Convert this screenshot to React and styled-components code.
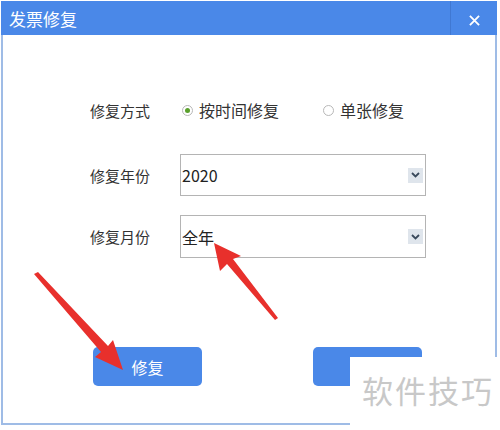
import React from "react";
import styled, { createGlobalStyle } from "styled-components";

const GlobalStyle = createGlobalStyle`
  html, body {
    margin: 0;
    padding: 0;
    background: #ffffff;
  }
  body {
    font-family: "Noto Sans CJK SC", "Noto Sans", sans-serif;
  }
`;

const App = () => {
  return (
    <>
      <GlobalStyle />
      <Page>
        <Dialog>
          <TitleBar>
            <Title>发票修复</Title>
            <CloseArea>
              <CloseIcon viewBox="0 0 12 12">
                <path d="M1 1 L11 11 M11 1 L1 11" />
              </CloseIcon>
            </CloseArea>
          </TitleBar>
          <Body>
            <Row $top={0} $height={24}>
              <Label>修复方式</Label>
              <RadioGroup>
                <RadioOption>
                  <Radio checked />
                  按时间修复
                </RadioOption>
                <RadioOption>
                  <Radio />
                  单张修复
                </RadioOption>
              </RadioGroup>
            </Row>

            <Row $top={32} $height={42}>
              <Label>修复年份</Label>
              <Select>
                <SelectValue>2020</SelectValue>
                <Chevron>
                  <svg width="9" height="6" viewBox="0 0 9 6">
                    <path d="M1 1 L4.5 4.5 L8 1" />
                  </svg>
                </Chevron>
              </Select>
            </Row>

            <Row $top={19} $height={43}>
              <Label>修复月份</Label>
              <Select>
                <SelectValue>全年</SelectValue>
                <Chevron>
                  <svg width="9" height="6" viewBox="0 0 9 6">
                    <path d="M1 1 L4.5 4.5 L8 1" />
                  </svg>
                </Chevron>
              </Select>
            </Row>

            <Buttons>
              <Button>修复</Button>
              {/* second button's label is hidden under the watermark */}
              <Button aria-label="取消" />
            </Buttons>
          </Body>
        </Dialog>

        <Arrows viewBox="0 0 500 430">
          <polygon points="34,274 38,272 108,346 113,340 123,370 95,357 101,352" />
          <polygon points="278,318 275,320 227,264 220,271 214,243 241,256 233,259" />
        </Arrows>

        <Watermark>软件技巧</Watermark>
      </Page>
    </>
  );
};

const Page = styled.div`
  position: relative;
  width: 500px;
  height: 430px;
  overflow: hidden;
  background: #ffffff;
`;

const Dialog = styled.div`
  width: 496px;
  height: 424px;
  margin-left: 1px;
  margin-top: 1px;
  border: 2px solid #9fbce6;
  border-top: none;
  box-sizing: border-box;
  display: flex;
  flex-direction: column;
  background: #ffffff;
`;

const TitleBar = styled.div`
  height: 34px;
  background: #4a88e8;
  display: flex;
  align-items: center;
  justify-content: space-between;
  margin: 0 -2px;
`;

const Title = styled.div`
  color: #ffffff;
  font-size: 17px;
  padding-left: 8px;
`;

const CloseArea = styled.div`
  width: 46px;
  height: 34px;
  display: flex;
  align-items: center;
  justify-content: center;
  border-left: 1px solid #4078d2;
`;

const CloseIcon = styled.svg`
  width: 11px;
  height: 11px;
  margin-top: 4px;
  path {
    stroke: #ffffff;
    stroke-width: 2;
    fill: none;
  }
`;

const Body = styled.div`
  flex: 1;
  display: flex;
  flex-direction: column;
  padding: 63px 0 0 87px;
`;

const Row = styled.div`
  display: grid;
  grid-template-columns: 90px 246px;
  align-items: center;
  height: ${(p) => p.$height}px;
  margin-top: ${(p) => p.$top}px;
`;

const Label = styled.div`
  font-size: 15px;
  color: #333333;
`;

const RadioGroup = styled.div`
  display: flex;
  align-items: center;
  gap: 44px;
  padding-left: 2px;
`;

const RadioOption = styled.div`
  display: flex;
  align-items: center;
  gap: 6px;
  font-size: 16px;
  color: #333333;
`;

const Radio = styled.span`
  width: 11px;
  height: 11px;
  border-radius: 50%;
  border: 1px solid #b8b8b8;
  box-sizing: border-box;
  display: flex;
  align-items: center;
  justify-content: center;
  &::after {
    content: "";
    width: 5px;
    height: 5px;
    border-radius: 50%;
    background: ${(p) => (p.checked ? "#5aa02c" : "transparent")};
  }
`;

const Select = styled.div`
  height: 100%;
  border: 1px solid #b4b4b4;
  box-sizing: border-box;
  display: flex;
  align-items: center;
  justify-content: space-between;
  padding: 0 1px;
`;

const SelectValue = styled.span`
  font-size: 16px;
  color: #222222;
`;

const Chevron = styled.span`
  width: 15px;
  height: 15px;
  background: #dfe5ec;
  display: flex;
  align-items: center;
  justify-content: center;
  margin-right: 1px;
  path {
    stroke: #3a4a5c;
    stroke-width: 1.8;
    fill: none;
  }
`;

const Buttons = styled.div`
  display: flex;
  gap: 111px;
  margin-top: 89px;
  padding-left: 3px;
`;

const Button = styled.div`
  width: 109px;
  height: 39px;
  border-radius: 5px;
  background: #4a88e8;
  color: #ffffff;
  font-size: 16px;
  display: flex;
  align-items: center;
  justify-content: center;
`;

const Arrows = styled.svg`
  position: absolute;
  left: 0;
  top: 0;
  width: 500px;
  height: 430px;
  pointer-events: none;
  polygon {
    fill: #e8302c;
  }
`;

const Watermark = styled.div`
  position: absolute;
  right: 0;
  bottom: 0;
  width: 150px;
  height: 73px;
  background: #ffffff;
  color: #c8c8c8;
  font-size: 31px;
  display: flex;
  align-items: center;
  justify-content: center;
  padding: 0 0 8px 6px;
  box-sizing: border-box;
  letter-spacing: 2px;
`;

export default App;
